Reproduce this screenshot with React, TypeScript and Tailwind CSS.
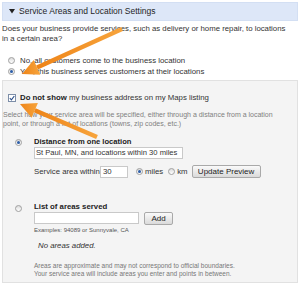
import React from 'react';

function Radio({ on }: { on?: boolean }) {
  return (
    <span className="flex h-[7px] w-[7px] shrink-0 items-center justify-center rounded-full border border-[#a0a0a0] bg-gradient-to-b from-[#dcdcdc] to-[#ffffff]">
      {on && <span className="h-[3px] w-[3px] rounded-full bg-[#2d5ea8]" />}
    </span>
  );
}

function Checkbox() {
  return (
    <span className="flex h-[8px] w-[8px] shrink-0 items-center justify-center border border-[#7d8ea8] bg-white">
      <svg width="6" height="6" viewBox="0 0 6 6">
        <path d="M0.8 3.2 L2.4 4.8 L5.3 1" fill="none" stroke="#2b4f8a" strokeWidth="1.1" />
      </svg>
    </span>
  );
}

function Button({ children, className }: { children: React.ReactNode; className?: string }) {
  return (
    <span
      className={
        'flex h-[13px] items-center justify-center rounded-[2px] border border-[#a9a9a9] bg-gradient-to-b from-[#fafafa] to-[#dadada] text-[8px] text-[#222] ' +
        (className ?? '')
      }
    >
      {children}
    </span>
  );
}

export default function App() {
  return (
    <div className="relative h-[289px] w-[300px] overflow-hidden bg-white pt-[2px] font-['Liberation_Sans',Arial,sans-serif] text-[#333]">
      {/* section header */}
      <div className="mx-[2px] flex h-[19px] items-center border border-[#d3dff3] bg-[#dde7f8] pl-[6px]">
        <svg width="6" height="5" viewBox="0 0 6 5">
          <path d="M0 0 H6 L3 4.5 Z" fill="#222" />
        </svg>
        <span className="ml-[4px] text-[8.5px] text-[#1f1f1f]">Service Areas and Location Settings</span>
      </div>

      <p className="mt-[3px] px-[2px] text-[7.8px] leading-[10px]">
        Does your business provide services, such as delivery or home repair, to locations
        <br />
        in a certain area?
      </p>

      <div className="mt-[11px] pl-[8px] text-[7.8px]">
        <div className="flex h-[11px] items-center gap-[5px]">
          <Radio />
          <span>No, all customers come to the business location</span>
        </div>
        <div className="flex h-[11px] items-center gap-[5px]">
          <Radio on />
          <span>Yes, this business serves customers at their locations</span>
        </div>
      </div>

      {/* settings box */}
      <div className="mx-[2px] mt-[3px] h-[203px] border border-[#e1e1e1] bg-[#f4f4f4]">
        <div className="mt-[11px] flex h-[11px] items-center gap-[4px] pl-[5px] text-[7.8px]">
          <Checkbox />
          <span>
            <b className="text-[#222]">Do not show</b> my business address on my Maps listing
          </span>
        </div>

        <p className="mt-[7px] whitespace-nowrap text-[7px] leading-[9px] text-[#808080]">
          Select how your service area will be specified, either through a distance from a location
          <br />
          point, or through a list of locations (towns, zip codes, etc.)
        </p>

        {/* distance */}
        <div className="mt-[9px] flex pl-[12px]">
          <div className="w-[19px] pt-[1.5px]">
            <Radio on />
          </div>
          <div className="text-[7.8px]">
            <div className="h-[10px] text-[7.6px] leading-[10px] font-bold text-[#222]">Distance from one location</div>
            <div className="flex h-[12px] w-[149px] items-center border border-[#c9c9c9] bg-white pl-[1px] text-[7.6px]">
              St Paul, MN, and locations within 30 miles
            </div>
            <div className="mt-[5px] flex h-[15px] items-center">
              <span className="w-[66px]">Service area within</span>
              <span className="flex h-[12px] w-[28px] items-center border border-[#c9c9c9] bg-white pl-[2px]">30</span>
              <span className="ml-[8px]">
                <Radio on />
              </span>
              <span className="ml-[2px]">miles</span>
              <span className="ml-[5px]">
                <Radio />
              </span>
              <span className="ml-[2px]">km</span>
              <Button className="ml-[4px] w-[69px]">Update Preview</Button>
            </div>
          </div>
        </div>

        {/* list */}
        <div className="mt-[23px] flex pl-[12px]">
          <div className="w-[19px] pt-[2.5px]">
            <Radio />
          </div>
          <div className="text-[7.8px]">
            <div className="h-[10px] text-[7.8px] leading-[10px] font-bold text-[#222]">List of areas served</div>
            <div className="flex items-start">
              <span className="h-[12px] w-[105px] border border-[#c9c9c9] bg-white" />
              <Button className="ml-[5px] w-[29px]">Add</Button>
            </div>
            <div className="mt-[1px] text-[6px] leading-[8px] text-[#555]">Examples: 94089 or Sunnyvale, CA</div>
            <div className="mt-[7px] pl-[4px] leading-[10px] italic">No areas added.</div>
            <p className="mt-[11px] text-[6.5px] leading-[8px] text-[#777]">
              Areas are approximate and may not correspond to official boundaries.
              <br />
              Your service area will include areas you enter and points in between.
            </p>
          </div>
        </div>
      </div>

      {/* annotation arrows */}
      <svg className="pointer-events-none absolute left-0 top-0" width="300" height="289" viewBox="0 0 300 289">
        <defs>
          <linearGradient id="arr" x1="0" y1="0" x2="1" y2="0">
            <stop offset="0" stopColor="#ee8418" />
            <stop offset="1" stopColor="#f7a43c" />
          </linearGradient>
        </defs>
        <g fill="url(#arr)" stroke="none">
          <path d="M121.1 27 L122.9 31 L37.9 69.5 L36.1 65.5 Z" />
          <path d="M22 74 L33.7 60.1 L40.3 74.7 Z" />
          <path d="M97.9 135 L96.1 139 L33.8 112.3 L35.6 108.3 Z" />
          <path d="M20 104 L37.9 103 L31.6 117.7 Z" />
        </g>
      </svg>
    </div>
  );
}
